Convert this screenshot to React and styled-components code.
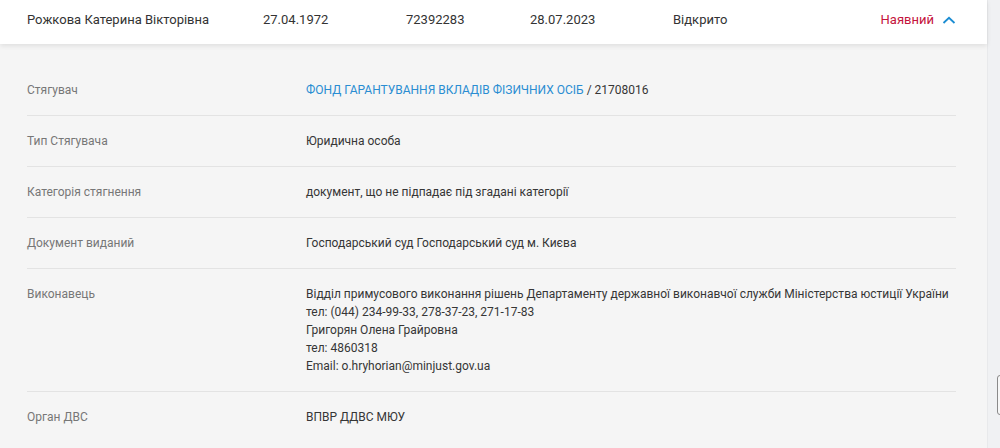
import React from "react";
import styled, { createGlobalStyle } from "styled-components";

const GlobalStyle = createGlobalStyle`
  html, body {
    margin: 0;
    padding: 0;
    background: #f0f1f3;
    font-family: Roboto, "Liberation Sans", sans-serif;
  }
`;

const details = [
    { label: "Стягувач", link: "ФОНД ГАРАНТУВАННЯ ВКЛАДІВ ФІЗИЧНИХ ОСІБ", value: " / 21708016" },
    { label: "Тип Стягувача", value: "Юридична особа" },
    { label: "Категорія стягнення", value: "документ, що не підпадає під згадані категорії" },
    { label: "Документ виданий", value: "Господарський суд Господарський суд м. Києва" },
    {
        label: "Виконавець",
        lines: [
            "Відділ примусового виконання рішень Департаменту державної виконавчої служби Міністерства юстиції України",
            "тел: (044) 234-99-33, 278-37-23, 271-17-83",
            "Григорян Олена Грайровна",
            "тел: 4860318",
            "Email: o.hryhorian@minjust.gov.ua",
        ],
    },
    { label: "Орган ДВС", value: "ВПВР ДДВС МЮУ" },
];

const App = () => {
    return (
        <Page>
            <GlobalStyle />
            <Main>
                <Header>
                    <Cell>Рожкова Катерина Вікторівна</Cell>
                    <Cell>27.04.1972</Cell>
                    <Cell>72392283</Cell>
                    <Cell>28.07.2023</Cell>
                    <Cell>Відкрито</Cell>
                    <StatusGroup>
                        <Status>Наявний</Status>
                        <svg width="14" height="8" viewBox="0 0 14 8">
                            <path d="M1.5 7 L7 1.8 L12.5 7" fill="none" stroke="#1a8cd2" strokeWidth="1.8" />
                        </svg>
                    </StatusGroup>
                </Header>
                <Details>
                    {details.map((d, i) => (
                        <Row key={i} last={i === details.length - 1}>
                            <Label>{d.label}</Label>
                            <Value>
                                {d.link && <Link>{d.link}</Link>}
                                {d.value}
                                {d.lines && d.lines.map((l, j) => <div key={j}>{l}</div>)}
                            </Value>
                        </Row>
                    ))}
                </Details>
            </Main>
            <Side>
                <ScrollThumb />
            </Side>
        </Page>
    );
};

const Page = styled.div`
    display: flex;
    height: 448px;
    overflow: hidden;
`;

const Main = styled.div`
    width: 987px;
    background: #f5f5f5;
    display: flex;
    flex-direction: column;
`;

const Header = styled.div`
    height: 44px;
    background: #fff;
    box-shadow: 0 2px 5px rgba(0, 0, 0, 0.09);
    display: grid;
    grid-template-columns: 236px 143px 124px 143px 1fr auto;
    align-items: center;
    padding: 0 31px 0 27px;
    position: relative;
    z-index: 1;
    font-size: 13px;
    color: #333;
`;

const Cell = styled.div`
    white-space: nowrap;
    padding-bottom: 5px;
`;

const StatusGroup = styled.div`
    display: flex;
    align-items: center;
    gap: 8px;
    padding-bottom: 5px;
`;

const Status = styled.span`
    color: #c4143c;
`;

const Details = styled.div`
    padding: 21px 31px 0 27px;
`;

const Row = styled.div`
    display: grid;
    grid-template-columns: 279px 1fr;
    padding: 16px 0;
    border-bottom: ${p => (p.last ? "none" : "1px solid #e3e3e3")};
    font-size: 12px;
    line-height: 18px;
`;

const Label = styled.div`
    color: #777;
`;

const Value = styled.div`
    color: #363636;
    white-space: nowrap;
`;

const Link = styled.span`
    color: #2a8dd2;
`;

const Side = styled.div`
    flex: 1;
    background: #f0f1f3;
    border-left: 1px solid #e8e9eb;
    position: relative;
`;

const ScrollThumb = styled.div`
    position: absolute;
    left: 9px;
    top: 375px;
    width: 8px;
    height: 38px;
    border: 1px solid #8a8a8a;
    border-radius: 3px;
    background: #f7f7f7;
`;

export default App;
